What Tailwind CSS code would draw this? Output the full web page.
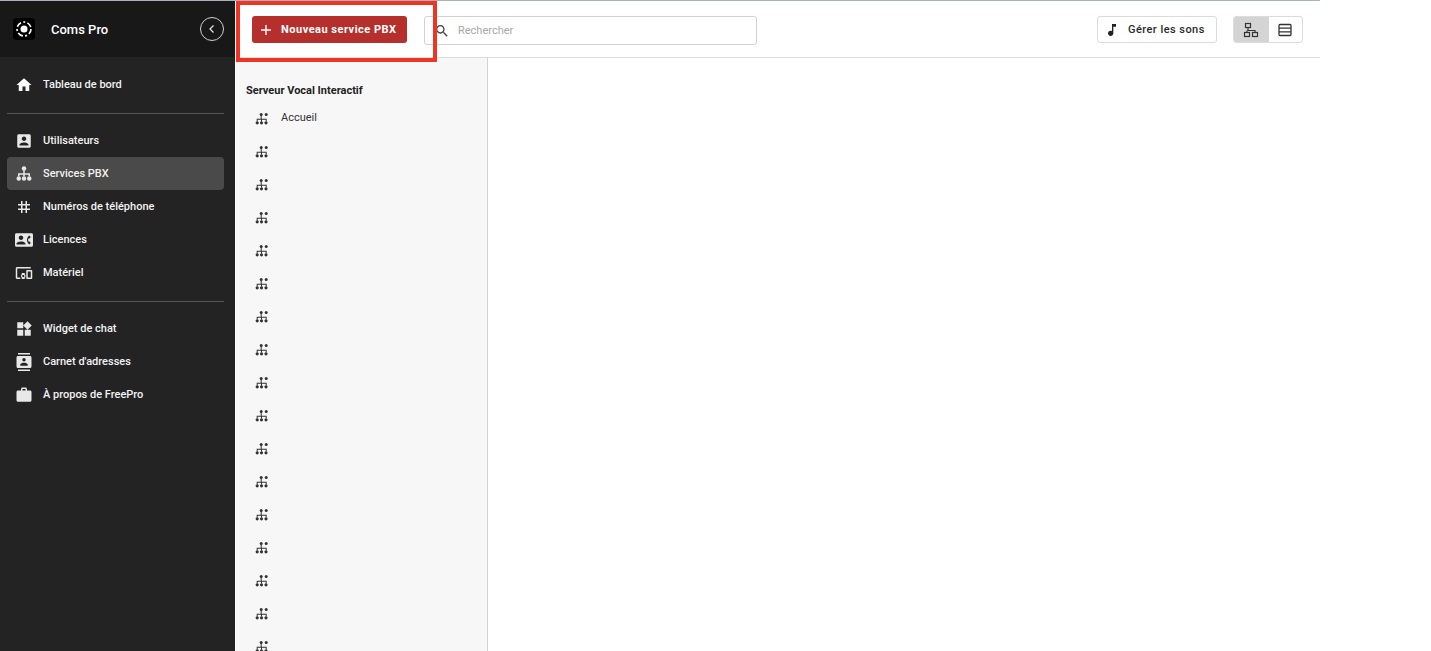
<!DOCTYPE html>
<html lang="fr">
<head>
    <meta charset="UTF-8">
    <meta name="viewport" content="width=device-width, initial-scale=1.0">
    <title>Coms Pro | Services PBX</title>
    <script src="https://cdn.jsdelivr.net/npm/@tailwindcss/browser@4"></script>
</head>
<body class="bg-white overflow-hidden font-['Roboto',sans-serif]">
    <svg class="hidden">
        <symbol id="pbx" viewBox="0 0 24 24"><circle cx="12" cy="4.5" r="3"/><path d="M11 7h2v4h7v4h-2v-2h-5v2h-2v-2H6v2H4v-4h7z"/><circle cx="5" cy="18" r="3"/><circle cx="12" cy="18" r="3"/><circle cx="19" cy="18" r="3"/></symbol>
        <symbol id="ivr" viewBox="0 0 14 14"><circle cx="6.2" cy="2.5" r="1.5"/><circle cx="11.2" cy="2.5" r="1.5"/><path d="M5.7 3.5h1v3.2h5v2.8h-1V7.7H7v1.8H6V7.7H2.700v1.800h-1V6.700h4z"/><circle cx="2.200" cy="10.800" r="1.600"/><circle cx="6.500" cy="10.800" r="1.600"/><circle cx="11" cy="10.800" r="1.600"/></symbol>
    </svg>

    <div class="relative w-[1320px] h-[651px] flex border-t border-[#a9b0bf] overflow-hidden">
        <!-- menu gauche -->
        <aside class="w-[235px] shrink-0 bg-[#232323] text-[#f2f2f2] text-[11px] font-medium">
            <div class="h-[56px] bg-[#181818] flex items-center pl-[13px] pr-[11px]">
                <div class="w-[22px] h-[22px] rounded-[4px] bg-black flex items-center justify-center">
                    <svg class="w-[18px] h-[18px]" viewBox="0 0 18 18" fill="none" stroke="#fff"><circle cx="9" cy="9" r="3.500" fill="#fff" stroke="none"/><circle cx="9" cy="9" r="7" stroke-width="1.600" stroke-dasharray="5.500 2.300 2 2.300"/></svg>
                </div>
                <span class="ml-4 pt-[2px] text-[13px] text-white">Coms Pro</span>
                <button class="ml-auto w-6 h-6 rounded-full border border-[#d0d0d0] flex items-center justify-center">
                    <svg class="w-3 h-3" viewBox="0 0 12 12" fill="none" stroke="#e6e6e6" stroke-width="1.200"><path d="M7.500 2.500 4 6l3.500 3.500"/></svg>
                </button>
            </div>

            <div class="pl-[7px] pr-[11px]">
                <a class="flex items-center h-[33px] mt-[11px] gap-[10px]">
                    <svg class="w-[18px] h-[18px] ml-[8px] fill-white" viewBox="0 0 24 24"><path d="M10 20v-6h4v6h5v-8h3L12 3 2 12h3v8z"/></svg>
                    <span class="pt-[2px]">Tableau de bord</span>
                </a>
                <div class="h-px bg-[#555] mt-[12px] mb-[10px]"></div>

                <a class="flex items-center h-[33px] gap-[10px]">
                    <svg class="w-[18px] h-[18px] ml-[8px] fill-[#e8e8e8]" viewBox="0 0 24 24"><path d="M3 5v14c0 1.100.890 2 2 2h14c1.100 0 2-.900 2-2V5c0-1.100-.900-2-2-2H5c-1.110 0-2 .900-2 2zm12 4c0 1.660-1.340 3-3 3s-3-1.340-3-3 1.340-3 3-3 3 1.340 3 3zm-9 8c0-2 4-3.100 6-3.100s6 1.100 6 3.100v1H6v-1z"/></svg>
                    <span class="pt-[2px]">Utilisateurs</span>
                </a>
                <a class="flex items-center h-[33px] gap-[10px] bg-[#4a4a4a] rounded-[4px]">
                    <svg class="w-[18px] h-[18px] ml-[8px] fill-[#e8e8e8]"><use href="#pbx"/></svg>
                    <span class="pt-[2px]">Services PBX</span>
                </a>
                <a class="flex items-center h-[33px] gap-[10px]">
                    <svg class="w-[18px] h-[18px] ml-[8px] fill-[#e8e8e8]" viewBox="0 0 24 24"><path d="M20 10V8h-4V4h-2v4h-4V4H8v4H4v2h4v4H4v2h4v4h2v-4h4v4h2v-4h4v-2h-4v-4h4zm-6 4h-4v-4h4v4z"/></svg>
                    <span class="pt-[2px]">Numéros de téléphone</span>
                </a>
                <a class="flex items-center h-[33px] gap-[10px]">
                    <svg class="w-[18px] h-[18px] ml-[8px] fill-[#e8e8e8]" viewBox="0 0 24 24"><path d="M22 3H2C.900 3 0 3.900 0 5v14c0 1.100.900 2 2 2h20c1.100 0 1.990-.900 1.990-2L24 5c0-1.100-.900-2-2-2zM8 6c1.660 0 3 1.340 3 3s-1.340 3-3 3-3-1.340-3-3 1.340-3 3-3zm6 12H2v-1c0-2 4-3.100 6-3.100s6 1.100 6 3.100v1zm3.850-4h1.640L21 16l-1.990 1.990c-1.310-.980-2.280-2.380-2.730-3.990-.180-.640-.280-1.310-.280-2s.100-1.360.280-2c.450-1.620 1.420-3.010 2.730-3.990L21 8l-1.510 2h-1.640c-.220.630-.350 1.300-.350 2s.130 1.370.350 2z"/></svg>
                    <span class="pt-[2px]">Licences</span>
                </a>
                <a class="flex items-center h-[33px] gap-[10px]">
                    <svg class="w-[18px] h-[18px] ml-[8px] fill-[#e8e8e8]" viewBox="0 0 24 24"><path d="M3 6h18V4H3c-1.100 0-2 .900-2 2v12c0 1.100.900 2 2 2h4v-2H3V6zm10 6H9v1.780c-.610.550-1 1.330-1 2.220s.390 1.670 1 2.220V20h4v-1.780c.610-.550 1-1.340 1-2.220s-.390-1.670-1-2.220V12zm-2 5.500c-.830 0-1.500-.670-1.500-1.500s.670-1.500 1.500-1.500 1.500.670 1.500 1.500-.670 1.500-1.500 1.500zM22 8h-6c-.500 0-1 .500-1 1v10c0 .500.500 1 1 1h6c.500 0 1-.500 1-1V9c0-.500-.500-1-1-1zm-1 10h-4v-8h4v8z"/></svg>
                    <span class="pt-[2px]">Matériel</span>
                </a>
                <div class="h-px bg-[#555] mt-[12px] mb-[10px]"></div>

                <a class="flex items-center h-[33px] gap-[10px]">
                    <svg class="w-[18px] h-[18px] ml-[8px] fill-[#e8e8e8]" viewBox="0 0 24 24"><path d="M13 13v8h8v-8h-8zM3 21h8v-8H3v8zM3 3v8h8V3H3zm13.660-1.310L11 7.340 16.660 13l5.660-5.660-5.660-5.650z"/></svg>
                    <span class="pt-[2px]">Widget de chat</span>
                </a>
                <a class="flex items-center h-[33px] gap-[10px]">
                    <svg class="w-[18px] h-[18px] ml-[8px] fill-[#e8e8e8]" viewBox="0 0 24 24"><path d="M20 0H4v2h16V0zM4 24h16v-2H4v2zM20 4H4c-1.100 0-2 .900-2 2v12c0 1.100.900 2 2 2h16c1.100 0 2-.900 2-2V6c0-1.100-.900-2-2-2zm-8 2.750c1.240 0 2.250 1.010 2.250 2.250s-1.010 2.250-2.250 2.250S9.750 10.240 9.750 9 10.760 6.750 12 6.750zM17 17H7v-1.500c0-1.670 3.330-2.500 5-2.500s5 .830 5 2.500V17z"/></svg>
                    <span class="pt-[2px]">Carnet d'adresses</span>
                </a>
                <a class="flex items-center h-[33px] gap-[10px]">
                    <svg class="w-[18px] h-[18px] ml-[8px] fill-[#e8e8e8]" viewBox="0 0 24 24"><path d="M20 6h-4V4c0-1.110-.890-2-2-2h-4c-1.110 0-2 .890-2 2v2H4c-1.110 0-1.990.890-1.990 2L2 19c0 1.110.890 2 2 2h16c1.110 0 2-.890 2-2V8c0-1.110-.890-2-2-2zm-6 0h-4V4h4v2z"/></svg>
                    <span class="pt-[2px]">À propos de FreePro</span>
                </a>
            </div>
        </aside>

        <div class="flex-1 flex flex-col min-w-0">
            <!-- barre du haut -->
            <header class="h-[57px] shrink-0 border-b border-[#dcdcdc] flex items-start pt-[15px] pl-[17px] pr-[17px]">
                <button class="w-[155px] h-[27px] bg-[#b5302c] rounded-[3px] flex items-center text-white text-[11px] font-bold tracking-[0.5px]">
                    <svg class="w-[12px] h-[12px] ml-[8px]" viewBox="0 0 12 12" stroke="#fff" stroke-width="1.400"><path d="M6 1v10M1 6h10"/></svg>
                    <span class="ml-[9px] pt-[2px]">Nouveau service PBX</span>
                </button>
                <div class="ml-[17px] w-[333px] h-[29px] border border-[#d2d2d2] rounded-[3px] flex items-center">
                    <svg class="w-[16px] h-[16px] ml-[9px] fill-[#444]" viewBox="0 0 24 24"><path d="M15.500 14h-.790l-.280-.270C15.410 12.590 16 11.110 16 9.500 16 5.910 13.090 3 9.500 3S3 5.910 3 9.500 5.910 16 9.500 16c1.610 0 3.090-.590 4.230-1.570l.270.280v.790l5 4.990L20.490 19l-4.990-5zm-6 0C7.010 14 5 11.990 5 9.500S7.010 5 9.500 5 14 7.010 14 9.500 11.990 14 9.500 14z"/></svg>
                    <span class="ml-[8px] pt-[2px] text-[11px] text-[#a8a8a8]">Rechercher</span>
                </div>
                <button class="ml-auto w-[120px] h-[27px] border border-[#dcdcdc] rounded-[3px] flex items-center text-[#2a2a2a] text-[11px] font-medium tracking-[0.45px]">
                    <svg class="w-[16px] h-[16px] ml-[6px] fill-[#222]" viewBox="0 0 24 24"><path d="M12 3v10.550c-.590-.340-1.270-.550-2-.550-2.210 0-4 1.790-4 4s1.790 4 4 4 4-1.790 4-4V7h4V3h-6z"/></svg>
                    <span class="ml-[8px] pt-[2px]">Gérer les sons</span>
                </button>
                <div class="ml-[16px] w-[70px] h-[27px] border border-[#dcdcdc] rounded-[3px] flex overflow-hidden">
                    <div class="w-[35px] bg-[#d4d4d4] flex items-center justify-center pr-[2px]">
                        <svg class="w-[16px] h-[16px]" viewBox="0 0 16 16" fill="none" stroke="#333" stroke-width="1.200"><rect x="2.500" y="1.500" width="5" height="4"/><rect x="1.500" y="10.500" width="5" height="4"/><rect x="9.500" y="10.500" width="5" height="4"/><path d="M5 5.500v3h7v2M4 8.500v2"/></svg>
                    </div>
                    <div class="flex-1 flex items-center justify-center pr-[2px]">
                        <svg class="w-[16px] h-[16px]" viewBox="0 0 16 16" fill="none" stroke="#333" stroke-width="1.300"><rect x="2" y="2.500" width="12" height="11" rx="1"/><path d="M2 6.200h12M2 9.800h12"/></svg>
                    </div>
                </div>
            </header>

            <div class="flex flex-1 min-h-0">
                <!-- liste des services -->
                <section class="w-[253px] shrink-0 bg-[#f7f7f7] border-r border-l border-[#d4d4d4] border-l-white overflow-hidden">
                    <h2 class="mt-[27px] ml-[10px] text-[11px] leading-[12px] font-bold text-[#222]">Serveur Vocal Interactif</h2>
                    <ul class="mt-[5px] ml-[19px] text-[11px] text-[#333]">
                        <li class="flex items-center h-[33px] gap-[12px]"><svg class="w-[14px] h-[14px] fill-[#333]"><use href="#ivr"/></svg><span>Accueil</span></li>
                        <li class="flex items-center h-[33px]"><svg class="w-[14px] h-[14px] fill-[#333]"><use href="#ivr"/></svg></li>
                        <li class="flex items-center h-[33px]"><svg class="w-[14px] h-[14px] fill-[#333]"><use href="#ivr"/></svg></li>
                        <li class="flex items-center h-[33px]"><svg class="w-[14px] h-[14px] fill-[#333]"><use href="#ivr"/></svg></li>
                        <li class="flex items-center h-[33px]"><svg class="w-[14px] h-[14px] fill-[#333]"><use href="#ivr"/></svg></li>
                        <li class="flex items-center h-[33px]"><svg class="w-[14px] h-[14px] fill-[#333]"><use href="#ivr"/></svg></li>
                        <li class="flex items-center h-[33px]"><svg class="w-[14px] h-[14px] fill-[#333]"><use href="#ivr"/></svg></li>
                        <li class="flex items-center h-[33px]"><svg class="w-[14px] h-[14px] fill-[#333]"><use href="#ivr"/></svg></li>
                        <li class="flex items-center h-[33px]"><svg class="w-[14px] h-[14px] fill-[#333]"><use href="#ivr"/></svg></li>
                        <li class="flex items-center h-[33px]"><svg class="w-[14px] h-[14px] fill-[#333]"><use href="#ivr"/></svg></li>
                        <li class="flex items-center h-[33px]"><svg class="w-[14px] h-[14px] fill-[#333]"><use href="#ivr"/></svg></li>
                        <li class="flex items-center h-[33px]"><svg class="w-[14px] h-[14px] fill-[#333]"><use href="#ivr"/></svg></li>
                        <li class="flex items-center h-[33px]"><svg class="w-[14px] h-[14px] fill-[#333]"><use href="#ivr"/></svg></li>
                        <li class="flex items-center h-[33px]"><svg class="w-[14px] h-[14px] fill-[#333]"><use href="#ivr"/></svg></li>
                        <li class="flex items-center h-[33px]"><svg class="w-[14px] h-[14px] fill-[#333]"><use href="#ivr"/></svg></li>
                        <li class="flex items-center h-[33px]"><svg class="w-[14px] h-[14px] fill-[#333]"><use href="#ivr"/></svg></li>
                        <li class="flex items-center h-[33px]"><svg class="w-[14px] h-[14px] fill-[#333]"><use href="#ivr"/></svg></li>
                    </ul>
                </section>
                <main class="flex-1 bg-white"></main>
            </div>
        </div>

        <!-- cadre rouge d'annotation -->
        <div class="absolute left-[236px] top-0 w-[201px] h-[61px] border-[4px] border-[#ee3524] pointer-events-none"></div>
    </div>
</body>
</html>
